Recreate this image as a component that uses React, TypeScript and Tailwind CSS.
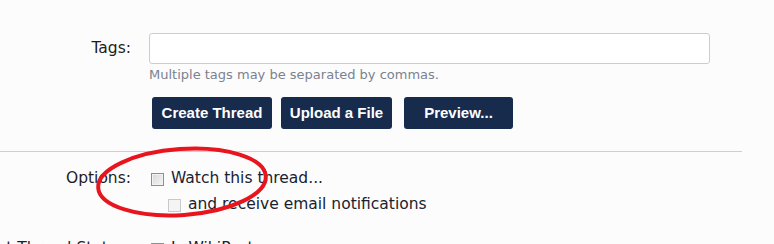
import React from "react";

const Box = ({ disabled }: { disabled?: boolean }) => (
  <span
    className={
      "inline-block w-[13px] h-[13px] border shrink-0 " +
      (disabled
        ? "border-[#c9c9c9] bg-[#f4f4f4]"
        : "border-[#8e8f8f] bg-[linear-gradient(135deg,#d8d8d8,#f4f4f4)] shadow-[inset_0_0_0_1px_#f2f2f2]")
    }
  />
);

export default function App() {
  return (
    <div className="relative w-[774px] h-[244px] overflow-hidden bg-[#fcfcfc] font-['DejaVu_Sans',Verdana,sans-serif] text-[#1e1e1e]">
      <div className="w-[742px] pt-[33px]">
        <div className="grid grid-cols-[131px_561px] gap-x-[18px]">
          <div className="h-[31px] flex items-center justify-end text-[15.5px]">Tags:</div>
          <div>
            <div className="h-[31px] border border-[#c5cfdb] rounded-[3px] bg-white" />
            <div className="mt-[3px] text-[13px] leading-[16px] text-[#7a8290]">
              Multiple tags may be separated by commas.
            </div>
            <div className="mt-[14px] flex ml-[3px] font-['Liberation_Sans',Arial,sans-serif] font-bold text-[15px] text-white">
              <button className="w-[120px] h-[32px] rounded-[3px] bg-[#172b4d]">Create Thread</button>
              <button className="ml-[9px] w-[111px] h-[32px] rounded-[3px] bg-[#172b4d]">Upload a File</button>
              <button className="ml-[12px] w-[109px] h-[32px] rounded-[3px] bg-[#172b4d]">Preview...</button>
            </div>
          </div>
        </div>
        <div className="mt-[22px] h-px bg-[#c8d0da]" />
        <div className="mt-[19px] grid grid-cols-[131px_561px] gap-x-[18px] text-[15.5px]">
          <div className="h-[16px] flex items-center justify-end">Options:</div>
          <div className="ml-[2px]">
            <div className="h-[16px] flex items-center">
              <Box />
              <span className="ml-[7px] text-[#1a2230]">Watch this thread...</span>
            </div>
            <div className="mt-[10px] ml-[17px] h-[16px] flex items-center">
              <Box disabled />
              <span className="ml-[7px] text-[#1a2230]">and receive email notifications</span>
            </div>
          </div>
          <div className="mt-[28px] h-[16px] flex items-center justify-end whitespace-nowrap">Set Thread Status:</div>
          <div className="mt-[28px] ml-[2px] h-[16px] flex items-center">
            <Box />
            <span className="ml-[7px] text-[#1a2230]">Is WikiPost</span>
          </div>
        </div>
      </div>
      <svg className="absolute left-0 top-0 pointer-events-none" width="774" height="244">
        <ellipse cx="182" cy="182" rx="84" ry="33" fill="none" stroke="#e8141e" strokeWidth="4" transform="rotate(-4 182 182)" />
      </svg>
    </div>
  );
}
